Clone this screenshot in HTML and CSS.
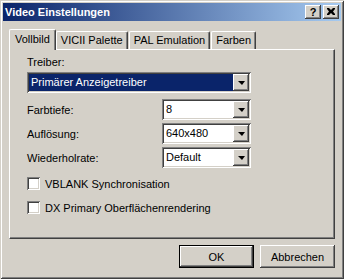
FILE: index.html
```html
<!DOCTYPE html>
<html>
<head>
<meta charset="utf-8">
<link rel="stylesheet" href="styles.css">
</head>
<body>
<div class="window">
  <div class="titlebar">
    <span class="title">Video Einstellungen</span>
    <div class="tbtns">
      <span class="tbtn">?</span>
      <span class="tbtn close">
        <svg width="8" height="7" viewBox="0 0 8 7"><path d="M0 0h2l2 2 2-2h2v1l-2 2.5 2 2.5v1h-2l-2-2-2 2h-2v-1l2-2.5-2-2.5z" fill="#000"/></svg>
      </span>
    </div>
  </div>
  <div class="content">
    <div class="tabs">
      <div class="tab active">Vollbild</div>
      <div class="tab">VICII Palette</div>
      <div class="tab">PAL Emulation</div>
      <div class="tab">Farben</div>
    </div>
    <div class="panel">
      <div class="lbl treiber">Treiber:</div>
      <div class="combo wide selected">
        <span class="val">Primärer Anzeigetreiber</span>
        <span class="arrow"><i></i></span>
      </div>
      <div class="rows">
        <div class="row">
          <span class="lbl">Farbtiefe:</span>
          <div class="combo"><span class="val">8</span><span class="arrow"><i></i></span></div>
        </div>
        <div class="row">
          <span class="lbl">Auflösung:</span>
          <div class="combo"><span class="val">640x480</span><span class="arrow"><i></i></span></div>
        </div>
        <div class="row">
          <span class="lbl">Wiederholrate:</span>
          <div class="combo"><span class="val">Default</span><span class="arrow"><i></i></span></div>
        </div>
      </div>
      <div class="checks">
        <label class="check"><span class="box"></span>VBLANK Synchronisation</label>
        <label class="check"><span class="box"></span>DX Primary Oberflächenrendering</label>
      </div>
    </div>
    <div class="buttons">
      <div class="btn default"><span>OK</span></div>
      <div class="btn"><span>Abbrechen</span></div>
    </div>
  </div>
</div>
</body>
</html>
```

FILE: styles.css
```css
* { box-sizing: border-box; }
html, body { margin: 0; padding: 0; }
body {
  background: #d4d0c8;
  font-family: "Liberation Sans", Arial, sans-serif;
  font-size: 11px;
  color: #000;
}
.window {
  width: 344px;
  height: 279px;
  background: #d4d0c8;
  padding: 3px;
  box-shadow: inset 1px 1px #d4d0c8, inset -1px -1px #404040, inset 2px 2px #fff, inset -2px -2px #808080;
}
.titlebar {
  height: 18px;
  display: flex;
  align-items: center;
  justify-content: space-between;
  background: linear-gradient(to right, #0a246a, #a6caf0);
  padding: 0 2px 0 2px;
}
.title {
  color: #fff;
  font-weight: bold;
  font-size: 11px;
}
.tbtns { display: flex; gap: 2px; }
.tbtn {
  width: 16px;
  height: 14px;
  background: #d4d0c8;
  box-shadow: inset -1px -1px #404040, inset 1px 1px #fff, inset -2px -2px #808080;
  display: flex;
  align-items: center;
  justify-content: center;
  font-weight: bold;
  font-size: 11px;
  line-height: 14px;
  padding-bottom: 1px;
}
.tbtn.close svg { display: block; }
.content { padding: 7px 6px 0 6px; }
.tabs {
  display: flex;
  height: 21px;
  align-items: flex-end;
  padding-left: 2px;
}
.tab {
  height: 18px;
  padding: 0 4px;
  line-height: 17px;
  border-top: 1px solid #fff;
  border-left: 1px solid #fff;
  border-right: 1px solid #404040;
  box-shadow: inset -1px 0 #808080;
  border-radius: 2px 2px 0 0;
  white-space: nowrap;
}
.tab.active {
  height: 21px;
  margin: 0 -2px -1px -2px;
  padding: 0 5px;
  line-height: 19px;
  background: #d4d0c8;
  position: relative;
  z-index: 1;
}
.tab + .tab { margin-left: 1px; }
.tab.active + .tab { margin-left: 2px; }
.panel {
  height: 190px;
  border-top: 1px solid #fff;
  border-left: 1px solid #fff;
  border-right: 1px solid #404040;
  border-bottom: 1px solid #404040;
  box-shadow: inset -1px -1px #808080;
  padding: 5px 0 0 17px;
}
.lbl { line-height: 13px; display: block; }
.treiber { margin-bottom: 3px; padding-top: 1px; }
.combo {
  width: 89px;
  height: 21px;
  background: #fff;
  box-shadow: inset 1px 1px #808080, inset -1px -1px #fff, inset 2px 2px #404040, inset -2px -2px #d4d0c8;
  display: flex;
  align-items: center;
  padding: 2px;
}
.combo.wide { width: 224px; }
.combo .val {
  flex: 1;
  padding-left: 2px;
  line-height: 17px;
  height: 17px;
  white-space: nowrap;
}
.combo.selected .val {
  background: #0a246a;
  color: #fff;
}
.arrow {
  width: 16px;
  height: 17px;
  background: #d4d0c8;
  box-shadow: inset -1px -1px #404040, inset 1px 1px #fff, inset -2px -2px #808080;
  display: flex;
  align-items: center;
  justify-content: center;
}
.arrow i {
  display: block;
  width: 0;
  height: 0;
  border-left: 4px solid transparent;
  border-right: 3px solid transparent;
  border-top: 4px solid #000;
  margin-left: 1px;
}
.rows {
  margin-top: 6px;
  display: flex;
  flex-direction: column;
  gap: 3px;
  width: 224px;
}
.row {
  display: flex;
  align-items: center;
  justify-content: space-between;
}
.row .lbl { padding-top: 2px; }
.checks {
  margin-top: 9px;
  display: flex;
  flex-direction: column;
  gap: 11px;
}
.check {
  display: flex;
  align-items: center;
  height: 13px;
  gap: 5px;
  white-space: nowrap;
}
.box {
  width: 13px;
  height: 13px;
  background: #fff;
  box-shadow: inset 1px 1px #808080, inset -1px -1px #fff, inset 2px 2px #404040, inset -2px -2px #d4d0c8;
  flex: none;
}
.buttons {
  display: flex;
  justify-content: flex-end;
  gap: 6px;
  margin-top: 6px;
}
.btn {
  width: 75px;
  height: 23px;
  background: #d4d0c8;
  box-shadow: inset -1px -1px #404040, inset 1px 1px #fff, inset -2px -2px #808080;
  display: flex;
  align-items: center;
  justify-content: center;
}
.btn.default {
  box-shadow: inset 0 0 0 1px #000, inset -2px -2px #404040, inset 2px 2px #fff, inset -3px -3px #808080;
}
.btn span { padding-top: 1px; }
```
